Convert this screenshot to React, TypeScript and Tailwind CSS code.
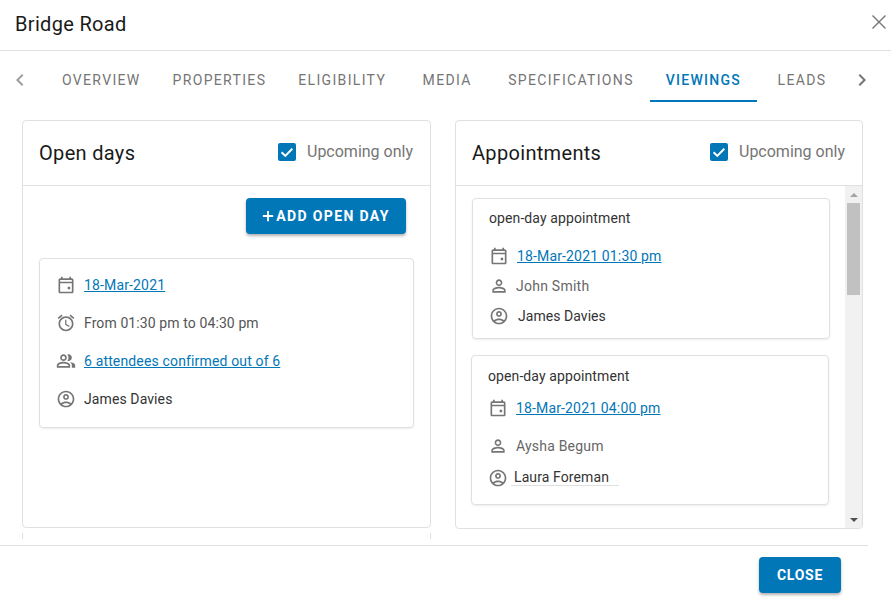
import React from "react";

const BLUE = "text-[#0277b8]";

const P = {
  event: "M19 4h-1V2h-2v2H8V2H6v2H5c-1.11 0-1.99.9-1.99 2L3 20c0 1.1.89 2 2 2h14c1.1 0 2-.9 2-2V6c0-1.1-.9-2-2-2zm0 16H5V10h14v10zm0-12H5V6h14v2zm-5 6h3v3h-3z",
  alarm: "M22 5.72l-4.6-3.86-1.29 1.53 4.6 3.86L22 5.72zM7.88 3.39L6.6 1.86 2 5.71l1.29 1.53 4.59-3.85zM12.5 8H11v6l4.75 2.85.75-1.23-4-2.37V8zM12 4c-4.97 0-9 4.03-9 9s4.03 9 9 9 9-4.03 9-9-4.03-9-9-9zm0 16c-3.87 0-7-3.13-7-7s3.13-7 7-7 7 3.13 7 7-3.13 7-7 7z",
  people: "M16.67 13.13C18.04 14.06 19 15.32 19 17v3h4v-3c0-2.18-3.57-3.47-6.33-3.87zM15 12c2.21 0 4-1.79 4-4s-1.79-4-4-4c-.47 0-.91.1-1.33.24C14.5 5.27 15 6.58 15 8s-.5 2.73-1.33 3.76c.42.14.86.24 1.33.24zM9 12c2.21 0 4-1.79 4-4s-1.79-4-4-4-4 1.79-4 4 1.79 4 4 4zm0-6c1.1 0 2 .9 2 2s-.9 2-2 2-2-.9-2-2 .9-2 2-2zM9 13c-2.67 0-8 1.34-8 4v3h16v-3c0-2.66-5.33-4-8-4zm6 5H3v-.99C3.2 16.29 6.3 15 9 15s5.8 1.29 6 2v1z",
  account: "M12 2C6.48 2 2 6.48 2 12s4.48 10 10 10 10-4.48 10-10S17.52 2 12 2zM7.35 18.5C8.66 17.56 10.26 17 12 17s3.34.56 4.65 1.5c-1.31.94-2.91 1.5-4.65 1.5s-3.34-.56-4.65-1.5zm10.79-1.38C16.45 15.8 14.32 15 12 15s-4.45.8-6.14 2.12C4.7 15.73 4 13.95 4 12c0-4.42 3.58-8 8-8s8 3.58 8 8c0 1.95-.7 3.73-1.86 5.12zM12 6c-1.93 0-3.5 1.57-3.5 3.5S10.07 13 12 13s3.5-1.57 3.5-3.5S13.93 6 12 6zm0 5c-.83 0-1.5-.67-1.5-1.5S11.17 8 12 8s1.5.67 1.5 1.5S12.83 11 12 11z",
  person: "M12 5.9c1.16 0 2.1.94 2.1 2.1s-.94 2.1-2.1 2.1S9.9 9.16 9.9 8s.94-2.1 2.1-2.1m0 9c2.97 0 6.1 1.46 6.1 2.1v1.1H5.9V17c0-.64 3.13-2.1 6.1-2.1M12 4C9.79 4 8 5.79 8 8s1.79 4 4 4 4-1.79 4-4-1.79-4-4-4zm0 9c-2.67 0-8 1.34-8 4v3h16v-3c0-2.66-5.33-4-8-4z",
};

function Icon({ d, className = "" }: { d: string; className?: string }) {
  return (
    <svg viewBox="0 0 24 24" fill="#757575" className={`w-5 h-5 shrink-0 ${className}`}>
      <path d={d} />
    </svg>
  );
}

function Upcoming() {
  return (
    <div className="flex items-center">
      <svg viewBox="0 0 18 18" className="w-[18px] h-[18px] mr-[11px]">
        <rect width="18" height="18" rx="2" fill="#0277b8" />
        <path d="M3.6 9.2l3.7 3.7 7-7.2" fill="none" stroke="#fff" strokeWidth="2" />
      </svg>
      <span className="text-base text-[#757575]">Upcoming only</span>
    </div>
  );
}

function PanelHead({ title }: { title: string }) {
  return (
    <div className="h-[65px] shrink-0 flex items-start justify-between border-b border-[#e0e0e0] pl-4 pr-[17px]">
      <h2 className="text-xl font-normal text-[#1a1a1a] mt-[20px] leading-[24px] tracking-[0.32px]">{title}</h2>
      <div className="mt-[19px] h-[24px]"><Upcoming /></div>
    </div>
  );
}

function Lnk({ children }: { children: React.ReactNode }) {
  return <a className={`${BLUE} underline text-sm tracking-[0.15px]`}>{children}</a>;
}

const tabs = ["OVERVIEW", "PROPERTIES", "ELIGIBILITY", "MEDIA", "SPECIFICATIONS", "VIEWINGS", "LEADS"];

export default function App() {
  return (
    <div className="w-[891px] h-[607px] bg-white overflow-hidden flex flex-col font-['Roboto',sans-serif]">
      <header className="h-[51px] shrink-0 flex items-center justify-between border-b border-[#e0e0e0] pl-[15px]">
        <h1 className="text-xl font-normal text-[#1a1a1a] tracking-[0.32px] -mt-[2px]">Bridge Road</h1>
        <svg viewBox="0 0 24 24" className="w-[24px] h-[24px] -mt-[7px]" fill="none" stroke="#757575" strokeWidth="1.4">
          <path d="M5.5 5.5l13 13M18.5 5.5l-13 13" />
        </svg>
      </header>

      <nav className="h-[51px] shrink-0 flex items-stretch pl-[8px]">
        <div className="w-[38px] flex items-center justify-start pt-[6px]">
          <svg viewBox="0 0 24 24" className="w-6 h-6" fill="#9e9e9e"><path d="M15.41 7.41L14 6l-6 6 6 6 1.41-1.41L10.83 12z" /></svg>
        </div>
        {tabs.map((t) => {
          const active = t === "VIEWINGS";
          return (
            <div
              key={t}
              className={`min-w-[90px] px-4 flex items-center justify-center text-sm border-b-2 pt-[9px] ${
                active
                  ? "text-[#0277b8] border-[#0277b8] font-medium tracking-[1.25px]"
                  : "text-[#757575] border-transparent font-normal tracking-[1.33px]"
              }`}
            >
              {t}
            </div>
          );
        })}
        <div className="w-[30px] flex items-center justify-center pt-[6px]">
          <svg viewBox="0 0 24 24" className="w-6 h-6" fill="#757575"><path d="M10 6L8.59 7.41 13.17 12l-4.58 4.59L10 18l6-6z" /></svg>
        </div>
      </nav>

      <main className="flex-1 flex items-start pl-[22px] pt-[18px] gap-[24px]">
        <div className="w-[409px]">
          <section className="h-[408px] border border-[#e0e0e0] rounded flex flex-col">
            <PanelHead title="Open days" />
            <div className="pl-4 pr-4 pt-3">
              <div className="flex justify-end pr-2">
                <button className="w-[160px] h-[36px] rounded bg-[#0277b8] text-white text-sm font-bold tracking-[1.35px] shadow-[0_2px_3px_rgba(0,0,0,0.3)] flex items-center justify-center">
                  <svg viewBox="0 0 14 14" className="w-[13px] h-[13px] mr-px" stroke="#fff" strokeWidth="2"><path d="M6.5 1v11M1 6.5h11" /></svg>
                  ADD OPEN DAY
                </button>
              </div>
              <div className="mt-[24px] h-[170px] w-[375px] border border-[#e0e0e0] rounded shadow-[0_1px_2px_rgba(0,0,0,0.08)] pl-4 pt-[7px] flex flex-col">
                <div className="h-[38px] flex items-center gap-[8px]"><Icon d={P.event} /><Lnk>18-Mar-2021</Lnk></div>
                <div className="h-[38px] flex items-center gap-[8px]"><Icon d={P.alarm} /><span className="text-sm text-[#555] tracking-[0.1px]">From 01:30 pm to 04:30 pm</span></div>
                <div className="h-[38px] flex items-center gap-[8px]"><Icon d={P.people} /><Lnk>6 attendees confirmed out of 6</Lnk></div>
                <div className="h-[38px] flex items-center gap-[8px]"><Icon d={P.account} /><span className="text-sm text-[#333] tracking-[0.1px]">James Davies</span></div>
              </div>
            </div>
          </section>
          <div className="mt-[5px] h-[6px] border-x border-[#e0e0e0]" />
        </div>

        <section className="w-[408px] h-[409px] border border-[#e0e0e0] rounded flex flex-col overflow-hidden">
          <PanelHead title="Appointments" />
          <div className="flex-1 flex min-h-0">
            <div className="flex-1 pl-4 pt-3 overflow-hidden">
              <div className="w-[358px] h-[141px] border border-[#e0e0e0] rounded shadow-[0_1px_2px_rgba(0,0,0,0.08)] pl-4 pt-[8px]">
                <div className="text-sm text-[#333] h-[22px] leading-[22px] tracking-[0.1px]">open-day appointment</div>
                <div className="mt-[16px] h-[22px] flex items-center gap-[8px]"><Icon d={P.event} /><Lnk>18-Mar-2021 01:30 pm</Lnk></div>
                <div className="mt-[8px] h-[22px] flex items-center gap-[7px]"><Icon d={P.person} /><span className="text-sm text-[#666] tracking-[0.25px]">John Smith</span></div>
                <div className="mt-[8px] h-[22px] flex items-center gap-[9px]"><Icon d={P.account} /><span className="text-sm text-[#333] tracking-[0.05px]">James Davies</span></div>
              </div>
              <div className="mt-[16px] -ml-px w-[358px] h-[150px] border border-[#e0e0e0] rounded shadow-[0_1px_2px_rgba(0,0,0,0.08)] pl-4 pt-[9px]">
                <div className="text-sm text-[#333] h-[22px] leading-[22px] tracking-[0.1px]">open-day appointment</div>
                <div className="mt-[10px] h-[22px] flex items-center gap-[8px]"><Icon d={P.event} /><Lnk>18-Mar-2021 04:00 pm</Lnk></div>
                <div className="mt-[16px] h-[22px] flex items-center gap-[8px]"><Icon d={P.person} /><span className="text-sm text-[#666] tracking-[0.2px]">Aysha Begum</span></div>
                <div className="mt-[10px] h-[22px] flex items-center gap-[3px]">
                  <Icon d={P.account} />
                  <span className="text-sm text-[#333] border-b border-[#e0e0e0] leading-[15px] pl-[3px] w-[108px] tracking-[0.1px]">Laura Foreman</span>
                </div>
              </div>
            </div>
            <div className="w-[17px] shrink-0 bg-[#f1f1f1] flex flex-col items-center justify-between">
              <div className="h-[17px] w-full flex items-center justify-center">
                <div className="w-0 h-0 border-x-[4px] border-x-transparent border-b-[4px] border-b-[#a3a3a3]" />
              </div>
              <div className="w-[13px] h-[92px] bg-[#c1c1c1] mr-[1px] mb-auto" />
              <div className="h-[17px] w-full flex items-center justify-center">
                <div className="w-0 h-0 border-x-[4px] border-x-transparent border-t-[4px] border-t-[#505050]" />
              </div>
            </div>
          </div>
        </section>
      </main>

      <footer className="h-[62px] shrink-0 w-[868px] border-t border-[#e0e0e0] flex justify-end pt-[11px] pr-[27px]">
        <button className="w-[82px] h-[36px] rounded bg-[#0277b8] text-white text-sm font-bold tracking-[0.75px] shadow-[0_2px_3px_rgba(0,0,0,0.3)]">
          CLOSE
        </button>
      </footer>
    </div>
  );
}
